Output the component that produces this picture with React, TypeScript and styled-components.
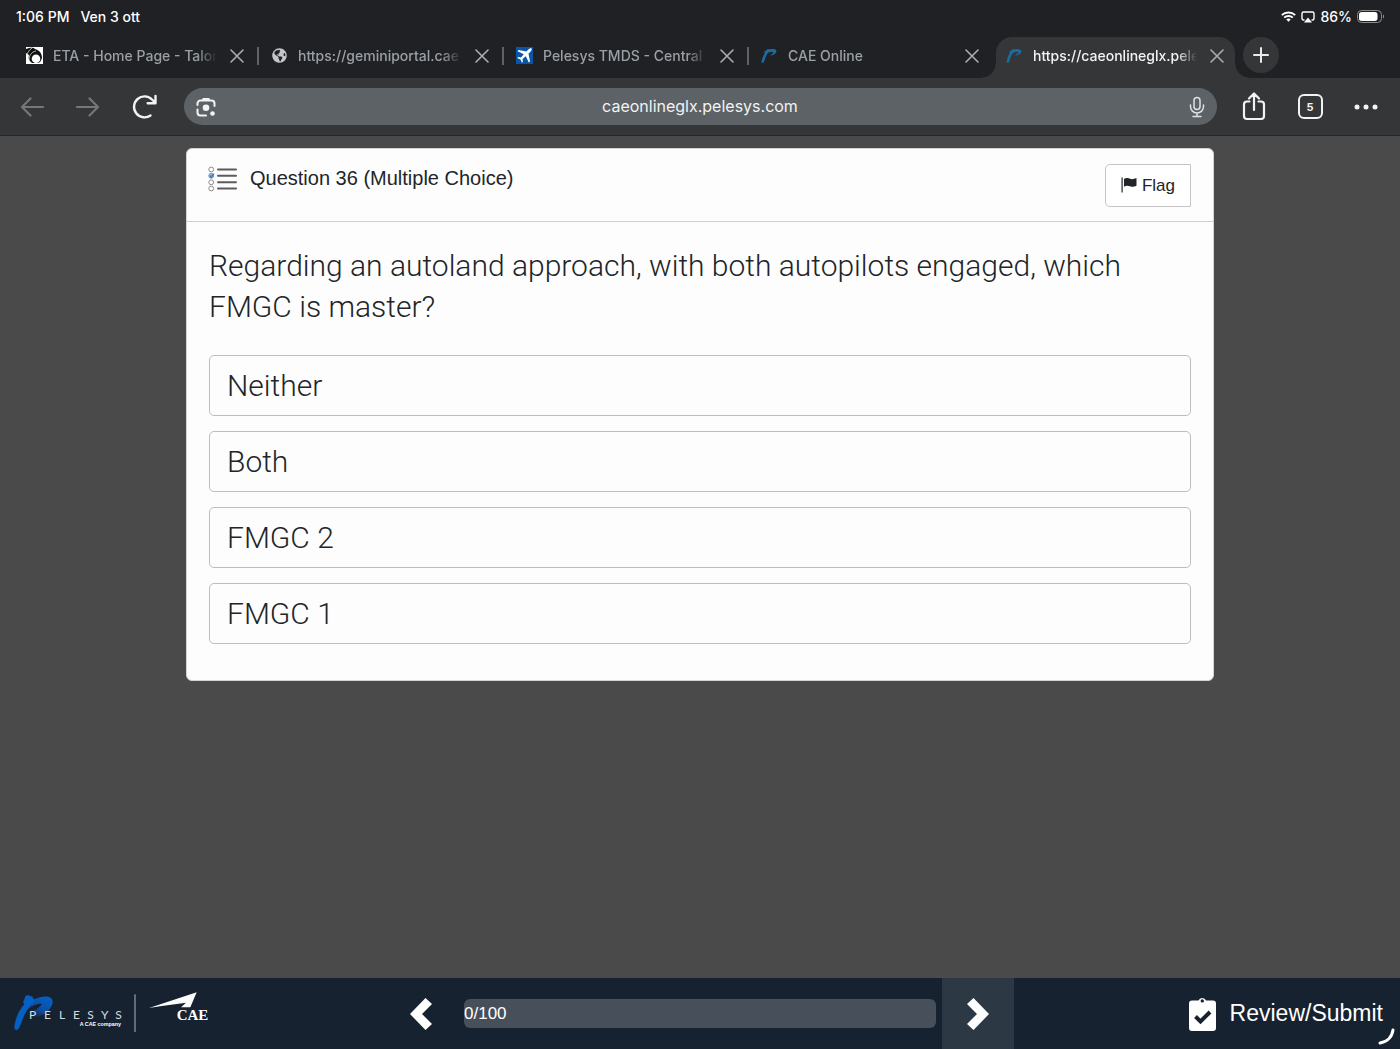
import React from "react";
import styled, { createGlobalStyle, css } from "styled-components";
import { FaGlobeAmericas } from "react-icons/fa";

const chrome = `Inter, "Liberation Sans", sans-serif`;
const content = `"Liberation Sans", Arial, sans-serif`;
const light = `Roboto, "Liberation Sans", sans-serif`;

const GlobalStyle = createGlobalStyle`
  *, *::before, *::after { box-sizing: border-box; }
  body { margin: 0; background: #4a4a4a; }
  button, input { font: inherit; color: inherit; margin: 0; }
  svg { display: block; flex: none; }
`;

const Page = styled.div`
  display: flex;
  flex-direction: column;
  min-height: 100vh;
  font-family: ${content};
  color: #212529;
`;

const StatusBar = styled.header`
  display: flex;
  justify-content: space-between;
  align-items: center;
  height: 37px;
  padding: 0 15px 4px 16px;
  background: #202124;
  color: #fff;
  font: 500 14px/20px ${chrome};
`;

const StatusGroup = styled.div<{ $gap: number }>`
  display: flex;
  align-items: center;
  gap: ${(p) => p.$gap}px;
`;

const TabStrip = styled.nav`
  display: flex;
  align-items: stretch;
  height: 41px;
  padding-left: 14px;
  background: #202124;
  font: 500 14px/20px ${chrome};
`;

const activeTab = css`
  color: #f1f3f4;
  margin: 0 4px 0 2px;
  padding: 0 11px 4px 10px;
  background: #353638;
  border-radius: 16px 16px 0 0;
  &::before,
  &::after {
    content: "";
    position: absolute;
    bottom: 0;
    width: 14px;
    height: 14px;
  }
  &::before {
    left: -14px;
    background: radial-gradient(circle at 0 0, transparent 13px, #353638 14px);
  }
  &::after {
    right: -14px;
    background: radial-gradient(circle at 100% 0, transparent 13px, #353638 14px);
  }
`;

const idleTab = css`
  color: #9aa0a6;
  padding: 0 0 4px 12px;
  &:not(:nth-child(4))::after {
    content: "";
    width: 2px;
    height: 18px;
    margin-left: 13px;
    background: #5f6368;
  }
`;

const Tab = styled.div<{ $active?: boolean }>`
  position: relative;
  display: flex;
  align-items: center;
  flex: 0 1 ${(p) => (p.$active ? 239 : 245)}px;
  min-width: 0;
  ${(p) => (p.$active ? activeTab : idleTab)}
`;

const TabTitle = styled.span`
  flex: 0 1 164px;
  margin: 0 13px 0 10px;
  overflow: hidden;
  white-space: nowrap;
  mask-image: linear-gradient(to right, #000 calc(100% - 20px), transparent);
`;

const IconButton = styled.button`
  display: flex;
  align-items: center;
  justify-content: center;
  flex: none;
  padding: 0;
  border: 0;
  background: none;
`;

const NewTab = styled(IconButton)`
  width: 36px;
  height: 36px;
  margin-left: 4px;
  border-radius: 50%;
  background: #353638;
  color: #e8eaed;
`;

const Toolbar = styled.div`
  display: flex;
  align-items: center;
  height: 58px;
  padding: 0 6px 0 4px;
  background: #353638;
  border-bottom: 1px solid #262729;
  color: #f1f3f4;
`;

const ToolButton = styled(IconButton)<{ $dim?: boolean }>`
  width: 56px;
  height: 44px;
  color: ${(p) => (p.$dim ? "#75777a" : "inherit")};
`;

const AddressBar = styled.div`
  display: flex;
  align-items: center;
  flex: 1;
  height: 37px;
  margin: 0 9px 0 12px;
  padding: 0 12px;
  border-radius: 19px;
  background: #5d6266;
`;

const Address = styled.input`
  flex: 1;
  min-width: 0;
  padding: 0 5px 2px 0;
  border: 0;
  background: none;
  text-align: center;
  font: 400 16px/22px ${chrome};
`;

const TabCount = styled.span`
  display: flex;
  align-items: center;
  justify-content: center;
  width: 25px;
  height: 25px;
  border: 2px solid currentColor;
  border-radius: 6px;
  font: 700 11px/12px ${chrome};
`;

const Main = styled.main`
  flex: 1;
  padding: 12px 16px;
  background: #4a4a4a;
`;

const Card = styled.section`
  max-width: 1028px;
  margin: 0 auto;
  padding-bottom: 36px;
  border: 1px solid #d4d4d4;
  border-radius: 6px;
  background: #fdfdfd;
`;

const CardHeader = styled.div`
  display: flex;
  align-items: flex-start;
  gap: 12px;
  height: 73px;
  padding: 15px 22px 0 21px;
  border-bottom: 1px solid #d0d0d0;
`;

const CardTitle = styled.h1`
  flex: 1;
  margin: 0;
  font: 400 20px/28px ${content};
`;

const FlagButton = styled.button`
  display: flex;
  align-items: center;
  gap: 5px;
  height: 43px;
  padding: 0 15px;
  border: 1px solid #c4c4c4;
  border-radius: 5px 0 0 5px;
  background: #fff;
  font-size: 17px;
`;

const Body = styled.div`
  padding: 23px 22px 0;
`;

const Question = styled.p`
  margin: 0 0 28px;
  font: 300 30px/41px ${light};
`;

const Options = styled.div`
  display: grid;
  gap: 15px;
`;

const Option = styled.button`
  height: 61px;
  padding: 0 17px;
  border: 1px solid #bdbdbd;
  border-radius: 5px;
  background: #fdfdfd;
  text-align: left;
  font: 300 30px/41px ${light};
`;

const Footer = styled.footer`
  position: relative;
  display: grid;
  grid-template-columns: 1fr minmax(0, 628px) 1fr;
  height: 71px;
  background: #172230;
  color: #fff;
`;

const Pager = styled.div`
  display: flex;
  align-items: center;
  gap: 6px;
`;

const PagerButton = styled(IconButton)<{ $lit?: boolean }>`
  width: 72px;
  height: 100%;
  background: ${(p) => (p.$lit ? "#2d3845" : "none")};
  color: #fff;
`;

const Progress = styled.div`
  flex: 1;
  height: 29px;
  border-radius: 6px;
  background: #464f5a;
  font-size: 17px;
  line-height: 29px;
`;

const Review = styled(IconButton)`
  justify-self: end;
  gap: 14px;
  padding-right: 17px;
  font-size: 23px;
`;

const Spinner = styled.svg`
  position: absolute;
  right: 5px;
  bottom: 4px;
`;

const Talon = () => (
  <svg width="17" height="17" viewBox="0 0 17 17">
    <path fill="#fff" d="M0 0h17v17H0z" />
    <path fill="#111" d="M0 2C4 1 6 0 9 2c4 1 7 4 7 9-1 3-2 5-5 5H6C3 14 2 11 3 8L0 6z" />
    <circle cx="10" cy="11.700" r="4.300" fill="#fff" />
    <path d="M1 9c0-3 2-6 5-8M3 13c0-4 2-8 7-9" fill="none" stroke="#ddd" strokeWidth=".8" />
  </svg>
);

const Plane = () => (
  <svg width="17" height="17" viewBox="0 0 17 17">
    <path fill="#0b55a8" d="M0 0h17v17H0z" />
    <path fill="#fff" d="M15.500 1.500c-1-.7-2.200.1-3.400 1.300L10.500 4.500 2.500 3 1.500 4.200l6.300 3L5 10.500l-2.800-.4-.9.900 3.200 1.500L6 15.700l.9-.9-.4-2.800 3.300-2.800 3 6.300 1.200-1-1.500-8 1.700-1.600c1.200-1.200 2-2.400 1.300-3.400z" />
  </svg>
);

const Brush = () => (
  <svg width="17" height="17" viewBox="0 0 17 17">
    <path d="M1.800 14.500C3 10 4.500 6.500 7 3.500" fill="none" stroke="#1b6ca3" strokeWidth="2.600" strokeLinecap="round" />
    <path d="M2.500 5.500C5 3 8 1.800 11 2c4 .1 5.200 1.500 4 3.500-1 1.800-3.500 3-6 3 1.500-1 3-2 3.500-3.200C12 4.500 10 4.600 7 5.500z" fill="#1b6ca3" />
  </svg>
);

const Globe = () => <FaGlobeAmericas size={15} color="#c4c7ca" />;

const Cross = () => (
  <svg width="14" height="14" viewBox="0 0 14 14" fill="none" stroke="#a9adb2" strokeWidth="1.600" strokeLinecap="round">
    <path d="M1 1l12 12M13 1L1 13" />
  </svg>
);

const Slot = styled.span`
  display: flex;
  justify-content: center;
  flex: none;
  width: 17px;
`;

const tabs = [
  { title: "ETA - Home Page - Talon", icon: <Talon /> },
  { title: "https://geminiportal.cae", icon: <Globe /> },
  { title: "Pelesys TMDS - Central", icon: <Plane /> },
  { title: "CAE Online", icon: <Brush /> },
  { title: "https://caeonlineglx.pele", icon: <Brush />, active: true },
];

const Arrow = ({ back }: { back?: boolean }) => (
  <svg width="24" height="20" viewBox="0 0 24 20" fill="none" stroke="currentColor" strokeWidth="2.200" strokeLinecap="round" strokeLinejoin="round">
    <path d={back ? "M23 10H2M10.500 1.500L2 10l8.500 8.500" : "M1 10h21M13.500 1.500L22 10l-8.500 8.500"} />
  </svg>
);

const Reload = () => (
  <svg width="26" height="26" viewBox="0 0 26 26" fill="none" stroke="currentColor" strokeWidth="2.400" strokeLinecap="round" strokeLinejoin="round">
    <path d="M19.500 21.500A10.500 10.500 0 1 1 21 5.500l3 3M24.500 2v7.300h-7.800" />
  </svg>
);

const Lens = () => (
  <svg width="20" height="20" viewBox="0 0 20 20" fill="none" stroke="#f1f3f4" strokeWidth="2" strokeLinecap="round">
    <path d="M1.500 8V6.500a3 3 0 0 1 3-3h11a3 3 0 0 1 3 3V9M1.500 12.500v3a3 3 0 0 0 3 3H10" />
    <path d="M6.800 1h6.400l1 2.500H5.800z" fill="#f1f3f4" stroke="none" />
    <circle cx="10" cy="10.800" r="3.300" fill="#f1f3f4" stroke="none" />
    <circle cx="16.500" cy="16.500" r="2.300" fill="#f1f3f4" stroke="none" />
  </svg>
);

const Mic = () => (
  <svg width="16" height="22" viewBox="0 0 16 22" fill="none" stroke="#dfe1e3" strokeWidth="1.500" strokeLinecap="round">
    <rect x="5" y="1.500" width="6" height="12" rx="3" />
    <path d="M1.500 9v1.500a6.500 6.500 0 0 0 13 0V9M8 17v3.500M4 20.500h8" />
  </svg>
);

const Share = () => (
  <svg width="24" height="29" viewBox="0 0 24 29" fill="none" stroke="currentColor" strokeWidth="2.200" strokeLinecap="round" strokeLinejoin="round">
    <path d="M7.500 9.500H5a3 3 0 0 0-3 3V24a3 3 0 0 0 3 3h14a3 3 0 0 0 3-3V12.500a3 3 0 0 0-3-3h-2.500M12 18V2M7 6.500l5-5 5 5" />
  </svg>
);

const Dots = () => (
  <svg width="24" height="6" viewBox="0 0 24 6" fill="currentColor">
    <circle cx="3" cy="3" r="2.500" />
    <circle cx="12" cy="3" r="2.500" />
    <circle cx="21" cy="3" r="2.500" />
  </svg>
);

const Wifi = () => (
  <svg width="15" height="11" viewBox="0 0 15 11" fill="none" stroke="#fff" strokeWidth="1.900">
    <path d="M.8 4.200a9.500 9.500 0 0 1 13.400 0M3.200 6.700a6.100 6.100 0 0 1 8.600 0" />
    <path d="M7.500 10.800L5.300 8.600a3.100 3.100 0 0 1 4.400 0z" fill="#fff" stroke="none" />
  </svg>
);

const AirPlay = () => (
  <svg width="14" height="12" viewBox="0 0 14 12">
    <path d="M3.500 9H2.500A1.500 1.500 0 0 1 1 7.500v-5A1.500 1.500 0 0 1 2.500 1h9A1.500 1.500 0 0 1 13 2.500v5A1.500 1.500 0 0 1 11.500 9h-1" fill="none" stroke="#fff" strokeWidth="1.400" />
    <path d="M7 6.500l4 5H3z" fill="#fff" />
  </svg>
);

const Battery = () => (
  <svg width="28" height="13" viewBox="0 0 28 13">
    <rect x=".5" y=".5" width="24" height="12" rx="4" fill="none" stroke="#8a8b8d" />
    <rect x="2" y="2" width="18.500" height="9" rx="2.700" fill="#fff" />
    <path d="M26 4.500c1.600.6 1.600 3.400 0 4z" fill="#8a8b8d" />
  </svg>
);

const ListIcon = () => (
  <svg width="30" height="30" viewBox="0 0 30 30">
    {[5.500, 11.800, 18.300, 24.500].map((y, i) => (
      <g key={y}>
        <circle cx="3.200" cy={y} r="2.400" fill={i === 1 ? "#9cc4ee" : "#fff"} stroke="#8b8b8b" />
        <path d={`M10 ${y}h18`} stroke="#5c5c5c" strokeWidth="2" strokeLinecap="round" />
      </g>
    ))}
    <path d="M1.800 11.500l1.400 1.500L5.800 9.800" fill="none" stroke="#2f7fd6" strokeWidth="1.500" />
  </svg>
);

const FlagIcon = () => (
  <svg width="16" height="18" viewBox="0 0 16 18" fill="#212529">
    <path d="M.5.500h1.200v15H.5zM3 2c3-2 4.500-.8 6.200-.2 2 .7 3.800.3 6.300-.8v7.800c-2.500 1.300-4.500 1.300-6.500.5C7 8.500 5.500 8.300 3 9.800z" />
  </svg>
);

const Chevron = ({ left }: { left?: boolean }) => (
  <svg width="24" height="32" viewBox="0 0 24 32" fill="currentColor">
    <path d={left ? "M15.500 0L22 6 12 16l10 10-6.500 6L0 16z" : "M7.500 0L1 6l10 10L1 26l6.500 6L23 16z"} />
  </svg>
);

const Clipboard = () => (
  <svg width="27" height="35" viewBox="0 0 27 35">
    <path fill="#fff" fillRule="evenodd" d="M3 4.500h6.500a4 4 0 0 1 7.500 0h7a3 3 0 0 1 3 3V32a3 3 0 0 1-3 3H3a3 3 0 0 1-3-3V7.500a3 3 0 0 1 3-3zm10.300-1.300a1.700 1.700 0 1 0 0 3.400 1.700 1.700 0 0 0 0-3.400z" />
    <path d="M6.500 20.500l5 5 9.500-9.500" fill="none" stroke="#172230" strokeWidth="4" />
  </svg>
);

const Logos = () => (
  <svg width="240" height="71" viewBox="0 24 720 213" role="img" aria-label="Pelesys and CAE">
    <defs>
      <linearGradient id="bowl" gradientUnits="userSpaceOnUse" x1="140" y1="80" x2="105" y2="145">
        <stop offset="0" stopColor="#0560c4" />
        <stop offset=".55" stopColor="#0a50a4" />
        <stop offset="1" stopColor="#172230" />
      </linearGradient>
    </defs>
    <path fill="url(#bowl)" d="M78 108C95 88 122 76 145 80C160 84 161 97 153 111C143 129 120 142 94 146L92 128C108 120 120 111 126 102C112 99 98 106 82 120Z" />
    <path fill="#0560c4" d="M43 169C47 142 57 121 73 103C68 98 69 92 74 87C73 78 80 74 88 77C95 77 101 81 99 87C107 84 104 96 98 100C78 120 69 143 61 166C56 181 47 184 43 175Z" />
    <text y="147" x="87 132 177 219 262 303 346" fill="#d7dbe0" fontFamily="Lato, sans-serif" fontWeight="400" fontSize="36">PELESYS</text>
    <text x="239" y="169" fill="#fff" fontFamily="Liberation Sans, sans-serif" fontWeight="700" fontSize="16">A CAE company</text>
    <path d="M405 73v113" stroke="#8a929b" strokeWidth="4" />
    <path fill="#fff" d="M447 114L590 67 571 112H543L558 98 480 109Z" />
    <text x="530" y="151" fill="#fff" fontFamily="Liberation Serif, serif" fontWeight="700" fontSize="45">CAE</text>
  </svg>
);

export default function App() {
  return (
    <Page>
      <GlobalStyle />
      <StatusBar>
        <StatusGroup $gap={11}>
          <span>1:06 PM</span>
          <span>Ven 3 ott</span>
        </StatusGroup>
        <StatusGroup $gap={5}>
          <Wifi />
          <AirPlay />
          <span>86%</span>
          <Battery />
        </StatusGroup>
      </StatusBar>
      <TabStrip aria-label="Tabs">
        {tabs.map((t) => (
          <Tab key={t.title} $active={t.active}>
            <Slot>{t.icon}</Slot>
            <TabTitle>{t.title}</TabTitle>
            <IconButton aria-label="Close tab">
              <Cross />
            </IconButton>
          </Tab>
        ))}
        <NewTab aria-label="New tab">
          <svg width="16" height="16" viewBox="0 0 16 16" stroke="currentColor" strokeWidth="2" strokeLinecap="round">
            <path d="M8 1v14M1 8h14" />
          </svg>
        </NewTab>
      </TabStrip>
      <Toolbar>
        <ToolButton $dim aria-label="Back"><Arrow back /></ToolButton>
        <ToolButton $dim aria-label="Forward"><Arrow /></ToolButton>
        <ToolButton aria-label="Reload"><Reload /></ToolButton>
        <AddressBar>
          <IconButton aria-label="Search with camera"><Lens /></IconButton>
          <Address aria-label="Address" defaultValue="caeonlineglx.pelesys.com" />
          <IconButton aria-label="Voice search"><Mic /></IconButton>
        </AddressBar>
        <ToolButton aria-label="Share"><Share /></ToolButton>
        <ToolButton aria-label="Show tabs"><TabCount>5</TabCount></ToolButton>
        <ToolButton aria-label="More"><Dots /></ToolButton>
      </Toolbar>
      <Main>
        <Card>
          <CardHeader>
            <ListIcon />
            <CardTitle>Question 36 (Multiple Choice)</CardTitle>
            <FlagButton><FlagIcon />Flag</FlagButton>
          </CardHeader>
          <Body>
            <Question>
              Regarding an autoland approach, with both autopilots engaged, which FMGC is master?
            </Question>
            <Options>
              {["Neither", "Both", "FMGC 2", "FMGC 1"].map((o) => (
                <Option key={o}>{o}</Option>
              ))}
            </Options>
          </Body>
        </Card>
      </Main>
      <Footer>
        <Logos />
        <Pager>
          <PagerButton aria-label="Previous question"><Chevron left /></PagerButton>
          <Progress role="progressbar" aria-label="Progress" aria-valuenow={0} aria-valuemax={100}>0/100</Progress>
          <PagerButton $lit aria-label="Next question"><Chevron /></PagerButton>
        </Pager>
        <Review><Clipboard />Review/Submit</Review>
        <Spinner width="17" height="17" viewBox="0 0 17 17" fill="none" stroke="#fff" strokeWidth="3" strokeLinecap="round">
          <path d="M15 2C14 9 9 14 2 15" />
        </Spinner>
      </Footer>
    </Page>
  );
}
